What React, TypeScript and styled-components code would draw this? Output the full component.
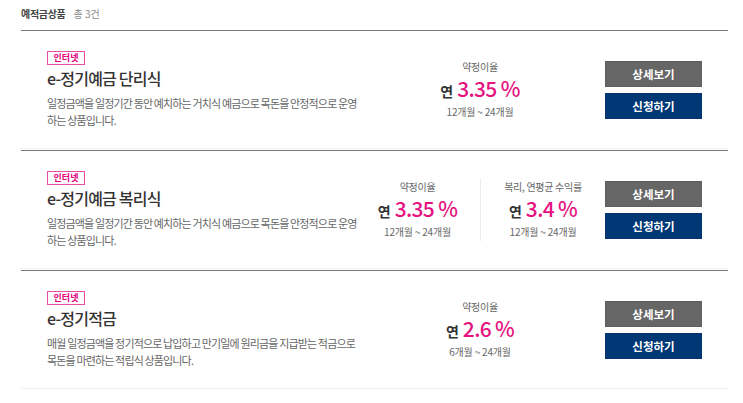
import React from "react";
import styled, { createGlobalStyle } from "styled-components";

const Global = createGlobalStyle`
  html, body { margin: 0; padding: 0; background: #fff; }
  body { font-family: "Noto Sans CJK KR", "Noto Sans", sans-serif; color: #333; }
  * { box-sizing: border-box; }
`;

const Page = styled.div`
  width: 707px;
  margin-left: 21px;
`;

const Header = styled.div`
  height: 31px;
  display: flex;
  align-items: center;
  gap: 8px;
  padding-bottom: 3px;
  border-bottom: 1px solid #7a7a7a;
`;

const HeaderTitle = styled.span`
  font-size: 10px;
  font-weight: 700;
  color: #444;
  letter-spacing: -0.3px;
`;

const HeaderCount = styled.span`
  font-size: 10px;
  color: #888;
`;

const Item = styled.div<{ $first?: boolean }>`
  display: grid;
  grid-template-columns: 308px 250px 97px;
  align-items: center;
  height: ${(p) => (p.$first ? 118 : 119)}px;
  padding: 0 26px;
  border-top: ${(p) => (p.$first ? "none" : "1px solid #7a7a7a")};
  border-bottom: 1px solid #f1f1f1;
  margin-bottom: 1px;
`;

const Info = styled.div`
  display: flex;
  flex-direction: column;
  align-items: flex-start;
`;

const Badge = styled.span`
  display: inline-flex;
  align-items: center;
  justify-content: center;
  width: 38px;
  height: 14px;
  border: 1px solid #ec4ea4;
  color: #e5007e;
  font-size: 9px;
  font-weight: 700;
  line-height: 1;
`;

const Title = styled.div`
  margin-top: 1px;
  font-size: 16px;
  font-weight: 500;
  color: #333;
  line-height: 24px;
  letter-spacing: -0.8px;
`;

const Desc = styled.p`
  margin: 5px 0 0;
  width: 311px;
  font-size: 11px;
  line-height: 17px;
  color: #666;
  letter-spacing: -0.85px;
`;

const Rates = styled.div<{ $single?: boolean }>`
  display: flex;
  justify-content: ${(p) => (p.$single ? "center" : "flex-start")};
  align-items: stretch;
`;

const RateBlock = styled.div<{ $divider?: boolean }>`
  width: 125px;
  display: flex;
  flex-direction: column;
  align-items: center;
  padding: 2px 0;
  border-left: ${(p) => (p.$divider ? "1px solid #ececec" : "none")};
`;

const RateLabel = styled.div`
  font-size: 10px;
  line-height: 14px;
  color: #666;
  letter-spacing: -0.3px;
`;

const RateValue = styled.div`
  display: flex;
  align-items: baseline;
  gap: 4px;
  margin-top: 1px;
  line-height: 26px;
`;

const Yeon = styled.span`
  font-size: 14px;
  font-weight: 700;
  color: #333;
`;

const Percent = styled.span`
  font-size: 21px;
  font-weight: 500;
  color: #e5137f;
  letter-spacing: -0.7px;
`;

const Period = styled.div`
  font-size: 10px;
  line-height: 14px;
  color: #666;
  margin-top: 1px;
  letter-spacing: -0.2px;
`;

const Buttons = styled.div`
  display: flex;
  flex-direction: column;
  gap: 6px;
`;

const Btn = styled.button<{ $variant: "gray" | "navy" }>`
  width: 97px;
  height: 26px;
  border: 1px solid ${(p) => (p.$variant === "gray" ? "#5e5e5e" : "#0a3471")};
  background: ${(p) => (p.$variant === "gray" ? "#666666" : "#003876")};
  color: #fff;
  font-family: inherit;
  font-size: 11.5px;
  font-weight: 700;
  padding: 0;
  cursor: pointer;
`;

type Rate = { label: string; value: string; period: string };
type Product = { title: string; desc: string; rates: Rate[] };

const products: Product[] = [
  {
    title: "e-정기예금 단리식",
    desc: "일정금액을 일정기간 동안 예치하는 거치식 예금으로 목돈을 안정적으로 운영하는 상품입니다.",
    rates: [{ label: "약정이율", value: "3.35 %", period: "12개월 ~ 24개월" }],
  },
  {
    title: "e-정기예금 복리식",
    desc: "일정금액을 일정기간 동안 예치하는 거치식 예금으로 목돈을 안정적으로 운영하는 상품입니다.",
    rates: [
      { label: "약정이율", value: "3.35 %", period: "12개월 ~ 24개월" },
      { label: "복리, 연평균 수익률", value: "3.4 %", period: "12개월 ~ 24개월" },
    ],
  },
  {
    title: "e-정기적금",
    desc: "매월 일정금액을 정기적으로 납입하고 만기일에 원리금을 지급받는 적금으로 목돈을 마련하는 적립식 상품입니다.",
    rates: [{ label: "약정이율", value: "2.6 %", period: "6개월 ~ 24개월" }],
  },
];

export default function App() {
  return (
    <Page>
      <Global />
      <Header>
        <HeaderTitle>예적금상품</HeaderTitle>
        <HeaderCount>총 3건</HeaderCount>
      </Header>
      {products.map((p, i) => (
        <Item key={p.title} $first={i === 0}>
          <Info>
            <Badge>인터넷</Badge>
            <Title>{p.title}</Title>
            <Desc>{p.desc}</Desc>
          </Info>
          <Rates $single={p.rates.length === 1}>
            {p.rates.map((r, j) => (
              <RateBlock key={r.label} $divider={j > 0}>
                <RateLabel>{r.label}</RateLabel>
                <RateValue>
                  <Yeon>연</Yeon>
                  <Percent>{r.value}</Percent>
                </RateValue>
                <Period>{r.period}</Period>
              </RateBlock>
            ))}
          </Rates>
          <Buttons>
            <Btn $variant="gray">상세보기</Btn>
            <Btn $variant="navy">신청하기</Btn>
          </Buttons>
        </Item>
      ))}
    </Page>
  );
}
